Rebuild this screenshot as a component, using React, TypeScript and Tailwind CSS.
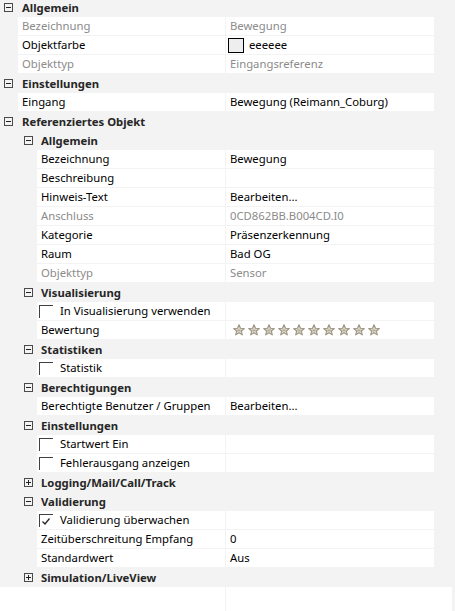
import React from "react";

type Row =
  | { kind: "header"; level: 0 | 1; name: string; open?: boolean }
  | {
      kind: "item";
      level: 0 | 1;
      name: string;
      value?: React.ReactNode;
      disabled?: boolean;
      check?: "on" | "off";
    };

// Stars for the "Bewertung" row
function Stars() {
  return (
    <div className="flex gap-[3px] pl-[7px]">
      {Array.from({ length: 10 }).map((_, i) => (
        <svg key={i} width="12" height="12" viewBox="0 0 12 12">
          <path
            d="M6 0.8 L7.5 4.3 L11.3 4.5 L8.4 7 L9.3 10.9 L6 8.8 L2.7 10.9 L3.6 7 L0.7 4.5 L4.5 4.3 Z"
            fill="#dcd8cc"
            stroke="#9c9480"
            strokeWidth="1.1"
            strokeLinejoin="round"
          />
          <path d="M4.6 5.4 L7.4 5.4 L7.6 7.8 L6 7 L4.4 7.8 Z" fill="#b1aa97" />
        </svg>
      ))}
    </div>
  );
}

function ColorValue() {
  return (
    <div className="flex items-center pl-[2px]">
      <div className="w-[16px] h-[15px] border border-black bg-[#eeeeee]" />
      <span className="ml-[5px]">eeeeee</span>
    </div>
  );
}

const rows: Row[] = [
  { kind: "header", level: 0, name: "Allgemein" },
  { kind: "item", level: 0, name: "Bezeichnung", value: "Bewegung", disabled: true },
  { kind: "item", level: 0, name: "Objektfarbe", value: <ColorValue /> },
  { kind: "item", level: 0, name: "Objekttyp", value: "Eingangsreferenz", disabled: true },
  { kind: "header", level: 0, name: "Einstellungen" },
  { kind: "item", level: 0, name: "Eingang", value: "Bewegung (Reimann_Coburg)" },
  { kind: "header", level: 0, name: "Referenziertes Objekt" },
  { kind: "header", level: 1, name: "Allgemein" },
  { kind: "item", level: 1, name: "Bezeichnung", value: "Bewegung" },
  { kind: "item", level: 1, name: "Beschreibung", value: "" },
  { kind: "item", level: 1, name: "Hinweis-Text", value: "Bearbeiten..." },
  { kind: "item", level: 1, name: "Anschluss", value: "0CD862BB.B004CD.I0", disabled: true },
  { kind: "item", level: 1, name: "Kategorie", value: "Präsenzerkennung" },
  { kind: "item", level: 1, name: "Raum", value: "Bad OG" },
  { kind: "item", level: 1, name: "Objekttyp", value: "Sensor", disabled: true },
  { kind: "header", level: 1, name: "Visualisierung" },
  { kind: "item", level: 1, name: "In Visualisierung verwenden", check: "off" },
  { kind: "item", level: 1, name: "Bewertung", value: <Stars /> },
  { kind: "header", level: 1, name: "Statistiken" },
  { kind: "item", level: 1, name: "Statistik", check: "off" },
  { kind: "header", level: 1, name: "Berechtigungen" },
  { kind: "item", level: 1, name: "Berechtigte Benutzer / Gruppen", value: "Bearbeiten..." },
  { kind: "header", level: 1, name: "Einstellungen" },
  { kind: "item", level: 1, name: "Startwert Ein", check: "off" },
  { kind: "item", level: 1, name: "Fehlerausgang anzeigen", check: "off" },
  { kind: "header", level: 1, name: "Logging/Mail/Call/Track", open: false },
  { kind: "header", level: 1, name: "Validierung" },
  { kind: "item", level: 1, name: "Validierung überwachen", check: "on" },
  { kind: "item", level: 1, name: "Zeitüberschreitung Empfang", value: "0" },
  { kind: "item", level: 1, name: "Standardwert", value: "Aus" },
  { kind: "header", level: 1, name: "Simulation/LiveView", open: false },
];

function Expander({ open }: { open: boolean }) {
  return (
    <svg width="9" height="9" viewBox="0 0 9 9" className="shrink-0">
      <rect x="0.5" y="0.5" width="8" height="8" fill="none" stroke="#4a4a4a" />
      <path d="M2 4.5 H7" stroke="#222" />
      {!open && <path d="M4.5 2 V7" stroke="#222" />}
    </svg>
  );
}

function CheckBox({ on }: { on: boolean }) {
  return (
    <div className="relative w-[14px] h-[13px] border-l border-t border-[#404040] shrink-0">
      {on && (
        <svg width="10" height="9" viewBox="0 0 10 9" className="absolute left-[1px] top-[2px]">
          <path d="M1.5 4.5 L4 7 L8.5 1.5" fill="none" stroke="#222" strokeWidth="1.3" />
        </svg>
      )}
    </div>
  );
}

function GridRow({ row }: { row: Row }) {
  if (row.kind === "header") {
    return (
      <div
        className={
          "flex h-[19px] items-center " + (row.level === 0 ? "pl-[4px]" : "pl-[24px]")
        }
      >
        <Expander open={row.open !== false} />
        <span
          className={
            "font-bold text-[#262626] whitespace-nowrap " +
            (row.level === 0 ? "ml-[9px]" : "ml-[8px]")
          }
        >
          {row.name}
        </span>
      </div>
    );
  }

  return (
    <div className="flex h-[19px] pb-px">
      <div className={row.level === 0 ? "w-[18px]" : "w-[37px]"} />
      <div
        className={
          "flex items-center bg-white whitespace-nowrap " +
          (row.level === 0 ? "w-[207px] " : "w-[188px] ") +
          (row.check ? "pl-[2px]" : "pl-[4px]") +
          (row.disabled ? " text-[#8b8b8b]" : " text-black")
        }
      >
        {row.check && <CheckBox on={row.check === "on"} />}
        <span className={row.check ? "ml-[7px]" : ""}>{row.name}</span>
      </div>
      <div
        className={
          "ml-px w-[208px] flex items-center bg-white whitespace-nowrap " +
          (typeof row.value === "string" ? "pl-[4px] " : "") +
          (row.disabled ? "text-[#8b8b8b]" : "text-black")
        }
      >
        {row.value}
      </div>
    </div>
  );
}

export default function App() {
  return (
    <div
      className="w-[455px] h-[611px] bg-[#f3f3f3] overflow-hidden flex flex-col text-[11.3px] leading-none"
      style={{ fontFamily: '"Noto Sans", "Open Sans", sans-serif' }}
    >
      {/* property rows, scrolled up by two pixels */}
      <div className="-mt-[2px]">
        {rows.map((r, i) => (
          <GridRow key={i} row={r} />
        ))}
      </div>

      {/* empty space under the grid */}
      <div className="flex flex-1">
        <div className="w-[225px] bg-white" />
        <div className="ml-px w-[226px] bg-white" />
      </div>
    </div>
  );
}
